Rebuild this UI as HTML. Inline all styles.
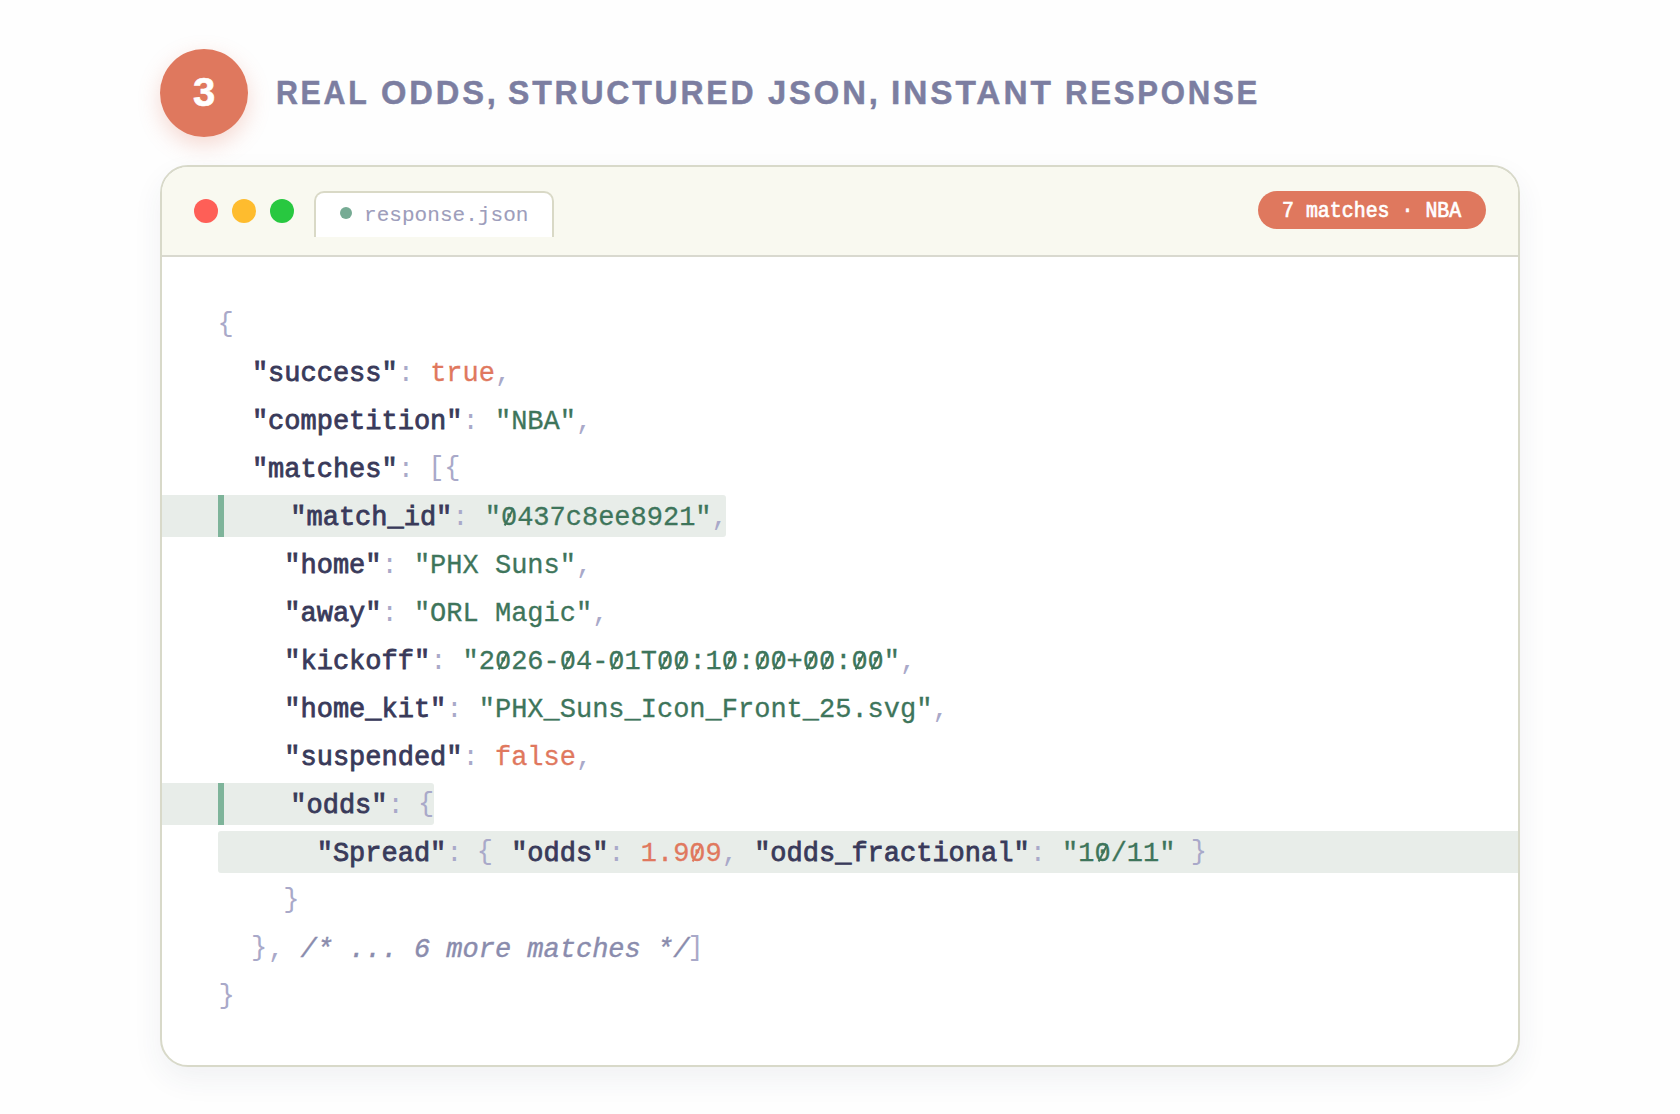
<!DOCTYPE html>
<html><head><meta charset="utf-8">
<style>
html,body{margin:0;padding:0;}
body{width:1680px;height:1114px;background:#fefefe;position:relative;overflow:hidden;font-family:"Liberation Sans",sans-serif;}
.num{position:absolute;left:160px;top:49px;width:88px;height:88px;border-radius:50%;background:#df785e;box-shadow:0 8px 22px rgba(223,120,94,0.28);color:#fff;font-weight:bold;font-size:40px;line-height:86px;text-align:center;-webkit-text-stroke:0.6px #fff;}
.title{position:absolute;left:0;top:72px;font-size:34px;font-weight:bold;color:#7c7ea1;letter-spacing:3px;white-space:nowrap;line-height:40px;-webkit-text-stroke:0.5px #7c7ea1;}
.title span{position:absolute;top:0;transform-origin:0 0;}
.card{position:absolute;left:160px;top:165px;width:1356px;height:898px;border:2px solid #d8d9c9;border-radius:28px;background:#fff;box-shadow:0 12px 30px rgba(50,60,90,0.065);overflow:hidden;}
.hdr{position:absolute;left:0;top:0;width:100%;height:88px;background:#f9f9f0;border-bottom:2px solid #d9d9cf;}
.dot{position:absolute;top:32px;width:24px;height:24px;border-radius:50%;}
.tab{position:absolute;left:152px;top:24px;width:236px;height:43.5px;background:#fff;border:2px solid #d9d9c6;border-bottom:none;border-radius:10px 10px 0 0;}
.tabdot{position:absolute;left:24px;top:14px;width:12px;height:12px;border-radius:50%;background:#76ab94;}
.tabtxt{position:absolute;left:48px;top:8px;font-family:"Liberation Mono",monospace;font-size:21px;color:#9d9dbb;line-height:30px;letter-spacing:0.05px;-webkit-text-stroke:0.1px #9d9dbb;}
.badge{position:absolute;left:1096px;top:24px;width:228px;height:38px;border-radius:19px;background:#df785e;}
.badge span{position:absolute;left:24px;top:5.5px;color:#fff;font-family:"Liberation Mono",monospace;font-size:22px;line-height:30px;white-space:pre;-webkit-text-stroke:0.7px #fff;transform:scaleX(0.905);transform-origin:0 0;}
.hl{position:absolute;background:#e8ede9;}
.bar{position:absolute;background:#7eb49a;}
.code{position:absolute;left:0;top:0;font-family:"Liberation Mono",monospace;font-size:27px;white-space:pre;}
.ln{position:absolute;height:48px;line-height:48px;}
.k{color:#393a5a;-webkit-text-stroke:0.8px #393a5a;}
.p{color:#a9a9c9;}
.s{color:#3e755b;-webkit-text-stroke:0.3px #3e755b;}
.o{color:#e0785e;-webkit-text-stroke:0.3px #e0785e;}
.c{color:#8a8cad;font-style:italic;-webkit-text-stroke:0.4px #8a8cad;}
.z{position:relative;}
.z::after{content:"";position:absolute;left:8.1px;top:13.5px;width:2.1px;height:19px;background:currentColor;transform:translate(-50%,-50%) rotate(27deg);}
.b{position:relative;top:-2px;left:-2px;}
.bc{position:relative;top:-2px;left:-1px;}
</style></head><body>
<div class="num">3</div>
<div class="title"><span style="left:276px;transform:scaleX(0.893)">REAL</span><span style="left:381.3px;transform:scaleX(0.960)">ODDS,</span><span style="left:508.2px;transform:scaleX(0.940)">STRUCTURED</span><span style="left:767.6px;transform:scaleX(0.963)">JSON,</span><span style="left:891.0px;transform:scaleX(0.982)">INSTANT</span><span style="left:1065.0px;transform:scaleX(0.916)">RESPONSE</span></div>
<div class="card">
  <div class="hdr">
    <div class="dot" style="left:32px;background:#fe5f57"></div>
    <div class="dot" style="left:70px;background:#febc2e"></div>
    <div class="dot" style="left:108px;background:#28c840"></div>
    <div class="tab"><div class="tabdot"></div><div class="tabtxt">response.json</div></div>
    <div class="badge"><span>7 matches · NBA</span></div>
  </div>
  <div class="hl" style="left:0;top:328px;width:564px;height:42px;border-radius:0 3px 3px 0"></div>
  <div class="bar" style="left:56px;top:328px;width:6px;height:42px"></div>
  <div class="hl" style="left:0;top:616px;width:272px;height:42px;border-radius:0 3px 3px 0"></div>
  <div class="bar" style="left:56px;top:616px;width:6px;height:42px"></div>
  <div class="hl" style="left:56px;top:664px;width:1300px;height:42px;border-radius:3px 0 0 3px"></div>
  <div class="code">
<div class="ln" style="left:57.5px;top:135px"><span class="p b">{</span></div>
<div class="ln" style="left:89.9px;top:183px"><span class="k">"success"</span><span class="p">: </span><span class="o">true</span><span class="p">,</span></div>
<div class="ln" style="left:89.9px;top:231px"><span class="k">"competition"</span><span class="p">: </span><span class="s">"NBA"</span><span class="p">,</span></div>
<div class="ln" style="left:89.9px;top:279px"><span class="k">"matches"</span><span class="p">: </span><span class="p b">[{</span></div>
<div class="ln" style="left:128.3px;top:327px"><span class="k">"match_id"</span><span class="p">: </span><span class="s">"<span class="z">0</span>437c8ee8921"</span><span class="p">,</span></div>
<div class="ln" style="left:122.3px;top:375px"><span class="k">"home"</span><span class="p">: </span><span class="s">"PHX Suns"</span><span class="p">,</span></div>
<div class="ln" style="left:122.3px;top:423px"><span class="k">"away"</span><span class="p">: </span><span class="s">"ORL Magic"</span><span class="p">,</span></div>
<div class="ln" style="left:122.3px;top:471px"><span class="k">"kickoff"</span><span class="p">: </span><span class="s">"2<span class="z">0</span>26-<span class="z">0</span>4-<span class="z">0</span>1T<span class="z">0</span><span class="z">0</span>:1<span class="z">0</span>:<span class="z">0</span><span class="z">0</span>+<span class="z">0</span><span class="z">0</span>:<span class="z">0</span><span class="z">0</span>"</span><span class="p">,</span></div>
<div class="ln" style="left:122.3px;top:519px"><span class="k">"home_kit"</span><span class="p">: </span><span class="s">"PHX_Suns_Icon_Front_25.svg"</span><span class="p">,</span></div>
<div class="ln" style="left:122.3px;top:567px"><span class="k">"suspended"</span><span class="p">: </span><span class="o">false</span><span class="p">,</span></div>
<div class="ln" style="left:128.3px;top:615px"><span class="k">"odds"</span><span class="p">: </span><span class="p b">{</span></div>
<div class="ln" style="left:154.7px;top:663px"><span class="k">"Spread"</span><span class="p">: </span><span class="p b">{</span><span class="p"> </span><span class="k">"odds"</span><span class="p">: </span><span class="o">1.9<span class="z">0</span>9</span><span class="p">, </span><span class="k">"odds_fractional"</span><span class="p">: </span><span class="s">"1<span class="z">0</span>/11"</span><span class="p"> </span><span class="p bc">}</span></div>
<div class="ln" style="left:122.3px;top:711px"><span class="p bc">}</span></div>
<div class="ln" style="left:89.9px;top:759px"><span class="p bc">}</span><span class="p">, </span><span class="c">/* ... 6 more matches */</span><span class="p b">]</span></div>
<div class="ln" style="left:57.5px;top:807px"><span class="p bc">}</span></div>
  </div>
</div>
</body></html>
